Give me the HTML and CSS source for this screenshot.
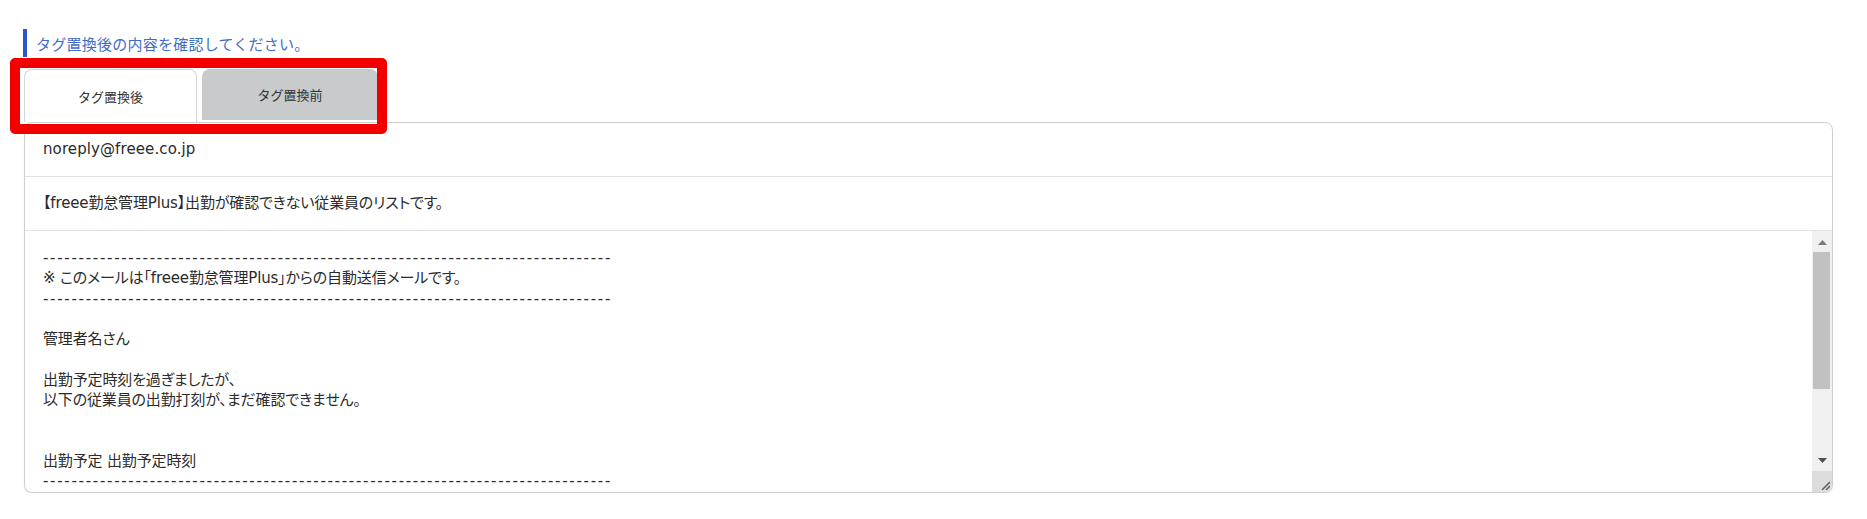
FILE: index.html
```
<!DOCTYPE html>
<html lang="ja">
<head>
    <meta charset="UTF-8">
    <meta name="viewport" content="width=device-width, initial-scale=1.0">
    <title>タグ置換後の確認</title>
    <link rel="stylesheet" href="styles.css">
</head>
<body>

    <div class="page">
        <p class="lead">タグ置換後の内容を確認してください。</p>

        <div class="tabs">
            <div class="tab active">タグ置換後</div>
            <div class="tab">タグ置換前</div>
        </div>

        <div class="mail">
            <div class="row sender">noreply@freee.co.jp</div>
            <div class="row">【freee勤怠管理Plus】出勤が確認できない従業員のリストです。</div>
            <div class="mail-body">
<pre class="mail-text"><span class="rule">--------------------------------------------------------------------------------</span>
※ このメールは「freee勤怠管理Plus」からの自動送信メールです。
<span class="rule">--------------------------------------------------------------------------------</span>

管理者名さん

出勤予定時刻を過ぎましたが、
以下の従業員の出勤打刻が、まだ確認できません。


出勤予定 出勤予定時刻
<span class="rule">--------------------------------------------------------------------------------</span></pre>
                <div class="scrollbar">
                    <div class="sb-btn up">
                        <svg width="9" height="5" viewBox="0 0 9 5"><path d="M0 5 L4.5 0 L9 5 Z" fill="#7a7a7a"/></svg>
                    </div>
                    <div class="sb-track">
                        <div class="sb-thumb"></div>
                    </div>
                    <div class="sb-btn down">
                        <svg width="9" height="5" viewBox="0 0 9 5"><path d="M0 0 L9 0 L4.5 5 Z" fill="#505050"/></svg>
                    </div>
                    <div class="sb-corner">
                        <svg width="10" height="10" viewBox="0 0 10 10">
                            <path d="M2 10 L10 2 M6 10 L10 6" stroke="#555" stroke-width="1.4"/>
                        </svg>
                    </div>
                </div>
            </div>
        </div>

        <div class="highlight"></div>
    </div>

</body>
</html>
```

FILE: styles.css
```
body {
    margin: 0;
    background-color: white;
    font-family: "DejaVu Sans", "Noto Sans CJK JP", sans-serif;
    color: #2a2a2a;
}

.page {
    position: relative;
    padding: 29px 34px 0 24px;
}

.lead {
    margin: 0 0 12px -1px;
    height: 28px;
    line-height: 30px;
    padding-left: 9px;
    border-left: 4px solid #2a58cc;
    color: #3f6cc4;
    font-family: "Noto Sans CJK JP", sans-serif;
    font-size: 15px;
    letter-spacing: 0.25px;
}

.tabs {
    display: flex;
    gap: 5px;
    height: 53px;
    align-items: flex-start;
}

.tab {
    width: 176px;
    height: 51px;
    display: flex;
    align-items: center;
    justify-content: center;
    background-color: #c9cacc;
    border-radius: 8px 8px 0 0;
    font-family: "Noto Sans CJK JP", sans-serif;
    font-size: 13px;
    color: #333;
}

.tab.active {
    box-sizing: border-box;
    width: 173px;
    height: 53px;
    background: white;
    border: 1px solid #d6d6d6;
    border-bottom: none;
}

.mail {
    border: 1px solid #cfcfcf;
    border-radius: 8px;
    box-shadow: 0 1px 1px rgba(0, 0, 0, 0.12);
    overflow: hidden;
}

.row {
    height: 53px;
    line-height: 53px;
    padding-left: 18px;
    border-bottom: 1px solid #e2e2e2;
    font-size: 15px;
    letter-spacing: -0.15px;
    font-feature-settings: "palt";
}

.row.sender {
    letter-spacing: 0.1px;
}

.mail-body {
    display: flex;
    height: 261px;
}

.mail-text {
    flex: 1;
    margin: 0;
    padding: 17px 0 0 18px;
    overflow: hidden;
    font-family: "DejaVu Sans", "Noto Sans CJK JP", sans-serif;
    font-size: 15px;
    line-height: 20.3px;
    letter-spacing: -0.15px;
    color: #2a2a2a;
    font-feature-settings: "palt";
}

.rule {
    letter-spacing: 1.7px;
}

.scrollbar {
    width: 20px;
    display: flex;
    flex-direction: column;
    background-color: #f0f0f0;
}

.sb-btn {
    height: 21px;
    display: flex;
    align-items: center;
    justify-content: center;
}

.sb-btn.up {
    padding-top: 2px;
    box-sizing: border-box;
}

.sb-btn.down {
    height: 22px;
}

.sb-track {
    flex: 1;
}

.sb-thumb {
    height: 137px;
    margin: 0 2px 0 1px;
    background-color: #c1c1c1;
}

.sb-corner {
    height: 21px;
    display: flex;
    align-items: flex-end;
    justify-content: flex-end;
    padding: 0 2px 2px 0;
    box-sizing: border-box;
    background-color: #dcdcdc;
}

.highlight {
    position: absolute;
    left: 10px;
    top: 58px;
    width: 357px;
    height: 56px;
    border: 10px solid #f20000;
    border-radius: 5px;
}
```
